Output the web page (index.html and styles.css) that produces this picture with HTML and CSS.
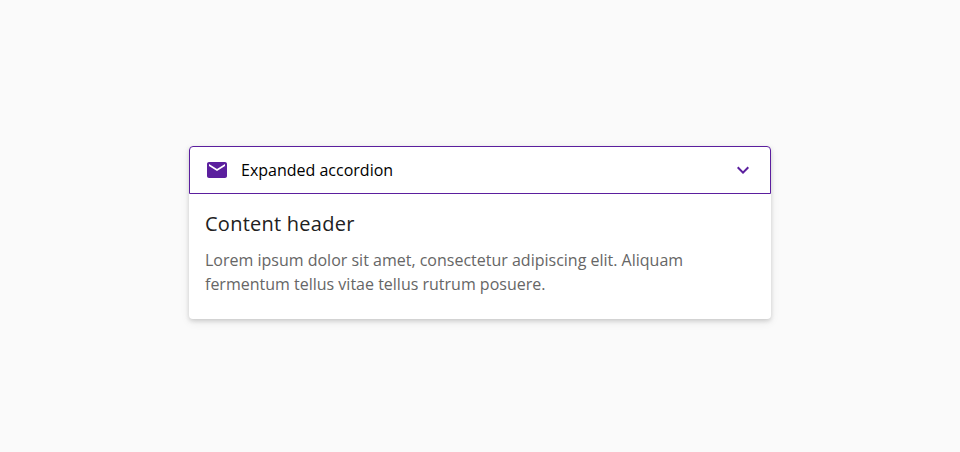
FILE: index.html
```html
<!DOCTYPE html>
<html lang="en">
<head>
<meta charset="utf-8">
<title>Accordion</title>
<link rel="stylesheet" href="styles.css">
</head>
<body>
<section class="accordion">
  <button class="accordion-header" type="button" aria-expanded="true">
    <svg class="icon" viewBox="0 0 24 24"><path d="M20 4H4c-1.100 0-1.990.9-1.990 2L2 18c0 1.100.9 2 2 2h16c1.100 0 2-.9 2-2V6c0-1.100-.9-2-2-2zm0 4l-8 5-8-5V6l8 5 8-5v2z"/></svg>
    <span class="accordion-title">Expanded accordion</span>
    <svg class="icon" viewBox="0 0 24 24"><path d="M7.410 8.590L12 13.170l4.590-4.580L18 10l-6 6-6-6z"/></svg>
  </button>
  <div class="accordion-content">
    <h2 class="content-title">Content header</h2>
    <p class="content-text">Lorem ipsum dolor sit amet, consectetur adipiscing elit. Aliquam fermentum tellus vitae tellus rutrum posuere.</p>
  </div>
</section>
</body>
</html>
```
FILE: styles.css
```css
* { box-sizing: border-box; }
body {
  margin: 0;
  padding-top: 146px;
  min-height: 100vh;
  background: #fafafa;
  font-family: "Open Sans", sans-serif;
}
.accordion {
  width: 582px;
  height: 173px;
  margin: 0 auto;
  background: #fff;
  border-radius: 4px;
  box-shadow: 0 2px 4px rgba(0, 0, 0, 0.14), 0 3px 10px rgba(0, 0, 0, 0.08);
}
.accordion-header {
  display: flex;
  align-items: center;
  width: 100%;
  height: 48px;
  padding: 0 15px;
  border: 1px solid #5b1f9e;
  border-radius: 4px 4px 0 0;
  background: #fff;
  color: #000;
  font: 400 16px/24px "Open Sans", sans-serif;
  text-align: left;
}
.icon { width: 24px; height: 24px; fill: #5b1f9e; flex: none; }
.accordion-title { flex: 1; margin-left: 12px; }
.accordion-content { padding: 14px 16px 23px; }
.content-title {
  margin: 0 0 8px;
  font-size: 20px;
  line-height: 32px;
  font-weight: 400;
  letter-spacing: 0.25px;
  color: #212121;
}
.content-text {
  margin: 0;
  font-size: 16px;
  line-height: 24px;
  color: #666;
}
```
